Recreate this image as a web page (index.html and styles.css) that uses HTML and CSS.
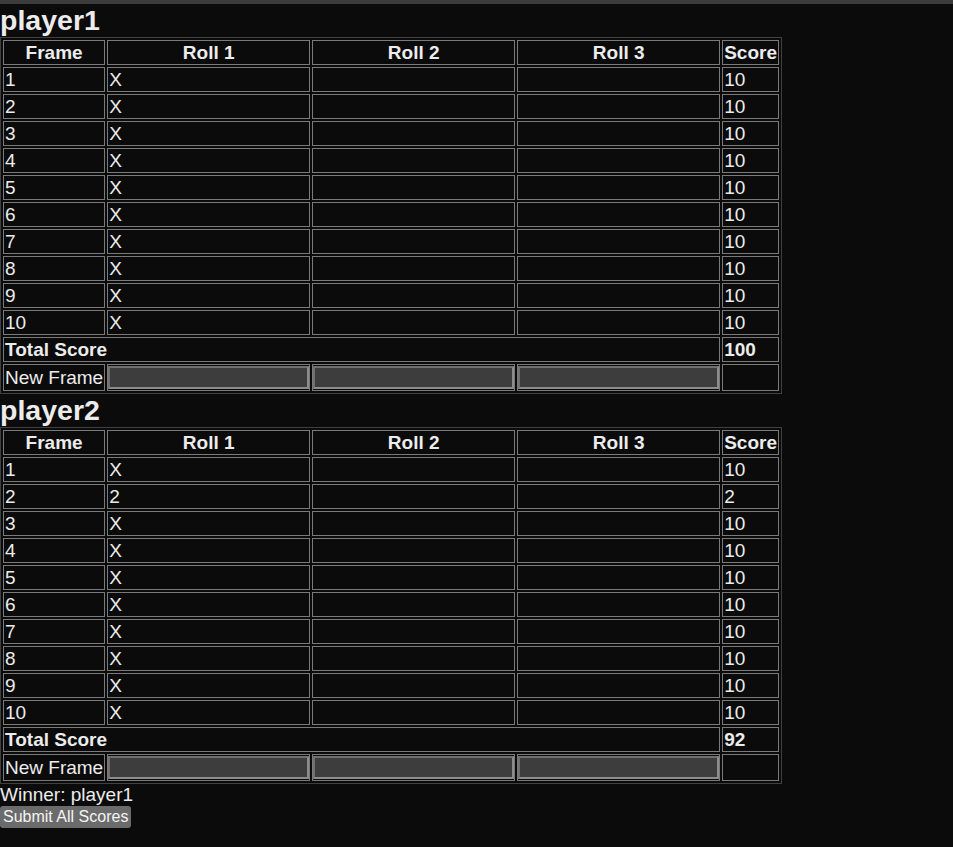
FILE: index.html
```html
<!DOCTYPE html>
<html>
<head>
<meta charset="utf-8">
<link rel="stylesheet" href="styles.css">
</head>
<body>
<div class="topbar"></div>
<h2 class="player">player1</h2>
<table class="score-table">
  <tr><th>Frame</th><th class="roll">Roll 1</th><th class="roll">Roll 2</th><th class="roll">Roll 3</th><th>Score</th></tr>
  <tr><td>1</td><td>X</td><td></td><td></td><td>10</td></tr>
  <tr><td>2</td><td>X</td><td></td><td></td><td>10</td></tr>
  <tr><td>3</td><td>X</td><td></td><td></td><td>10</td></tr>
  <tr><td>4</td><td>X</td><td></td><td></td><td>10</td></tr>
  <tr><td>5</td><td>X</td><td></td><td></td><td>10</td></tr>
  <tr><td>6</td><td>X</td><td></td><td></td><td>10</td></tr>
  <tr><td>7</td><td>X</td><td></td><td></td><td>10</td></tr>
  <tr><td>8</td><td>X</td><td></td><td></td><td>10</td></tr>
  <tr><td>9</td><td>X</td><td></td><td></td><td>10</td></tr>
  <tr><td>10</td><td>X</td><td></td><td></td><td>10</td></tr>
  <tr class="total"><td colspan="4">Total Score</td><td>100</td></tr>
  <tr class="new-frame"><td>New Frame</td><td class="in"><input type="text"></td><td class="in"><input type="text"></td><td class="in"><input type="text"></td><td></td></tr>
</table>
<h2 class="player">player2</h2>
<table class="score-table">
  <tr><th>Frame</th><th class="roll">Roll 1</th><th class="roll">Roll 2</th><th class="roll">Roll 3</th><th>Score</th></tr>
  <tr><td>1</td><td>X</td><td></td><td></td><td>10</td></tr>
  <tr><td>2</td><td>2</td><td></td><td></td><td>2</td></tr>
  <tr><td>3</td><td>X</td><td></td><td></td><td>10</td></tr>
  <tr><td>4</td><td>X</td><td></td><td></td><td>10</td></tr>
  <tr><td>5</td><td>X</td><td></td><td></td><td>10</td></tr>
  <tr><td>6</td><td>X</td><td></td><td></td><td>10</td></tr>
  <tr><td>7</td><td>X</td><td></td><td></td><td>10</td></tr>
  <tr><td>8</td><td>X</td><td></td><td></td><td>10</td></tr>
  <tr><td>9</td><td>X</td><td></td><td></td><td>10</td></tr>
  <tr><td>10</td><td>X</td><td></td><td></td><td>10</td></tr>
  <tr class="total"><td colspan="4">Total Score</td><td>92</td></tr>
  <tr class="new-frame"><td>New Frame</td><td class="in"><input type="text"></td><td class="in"><input type="text"></td><td class="in"><input type="text"></td><td></td></tr>
</table>
<div class="winner">Winner: player1</div>
<button class="submit">Submit All Scores</button>
</body>
</html>
```

FILE: styles.css
```css
html, body {
  margin: 0;
  padding: 0;
  background: #0b0b0b;
}
body {
  color: #ececec;
  font-family: "Liberation Sans", Arial, sans-serif;
  font-size: 19px;
}
.topbar {
  height: 4px;
  background: #3c3c3c;
}
.player {
  margin: 0;
  font-size: 28.5px;
  font-weight: bold;
  line-height: 33px;
}
.score-table {
  border: 1px solid #404040;
  border-spacing: 2px;
  border-collapse: separate;
}
.score-table th,
.score-table td {
  border: 1px solid #7a7a7a;
  padding: 1px;
  line-height: 21px;
  height: 21px;
}
.score-table th {
  font-weight: bold;
  text-align: center;
}
.score-table td {
  text-align: left;
}
.score-table .roll {
  width: 199px;
}
.total td {
  font-weight: bold;
}
.new-frame td {
  height: 23px;
}
.new-frame td.in {
  padding: 1px 0;
}
.new-frame input {
  display: block;
  box-sizing: border-box;
  width: 100%;
  height: 23px;
  margin: 0;
  padding: 1px 2px;
  background: #3d3d3d;
  color: #fff;
  border: 2px solid;
  border-color: #707070 #8c8c8c #8c8c8c #707070;
  font-family: "Liberation Sans", Arial, sans-serif;
  font-size: 13px;
}
.winner {
  line-height: 22px;
}
.submit {
  display: block;
  margin: 0;
  padding: 2px 3px;
  border: none;
  border-radius: 3px;
  background: #6b6b6b;
  color: #f4f4f4;
  font-family: "Liberation Sans", Arial, sans-serif;
  font-size: 16px;
  line-height: 18px;
}
```
